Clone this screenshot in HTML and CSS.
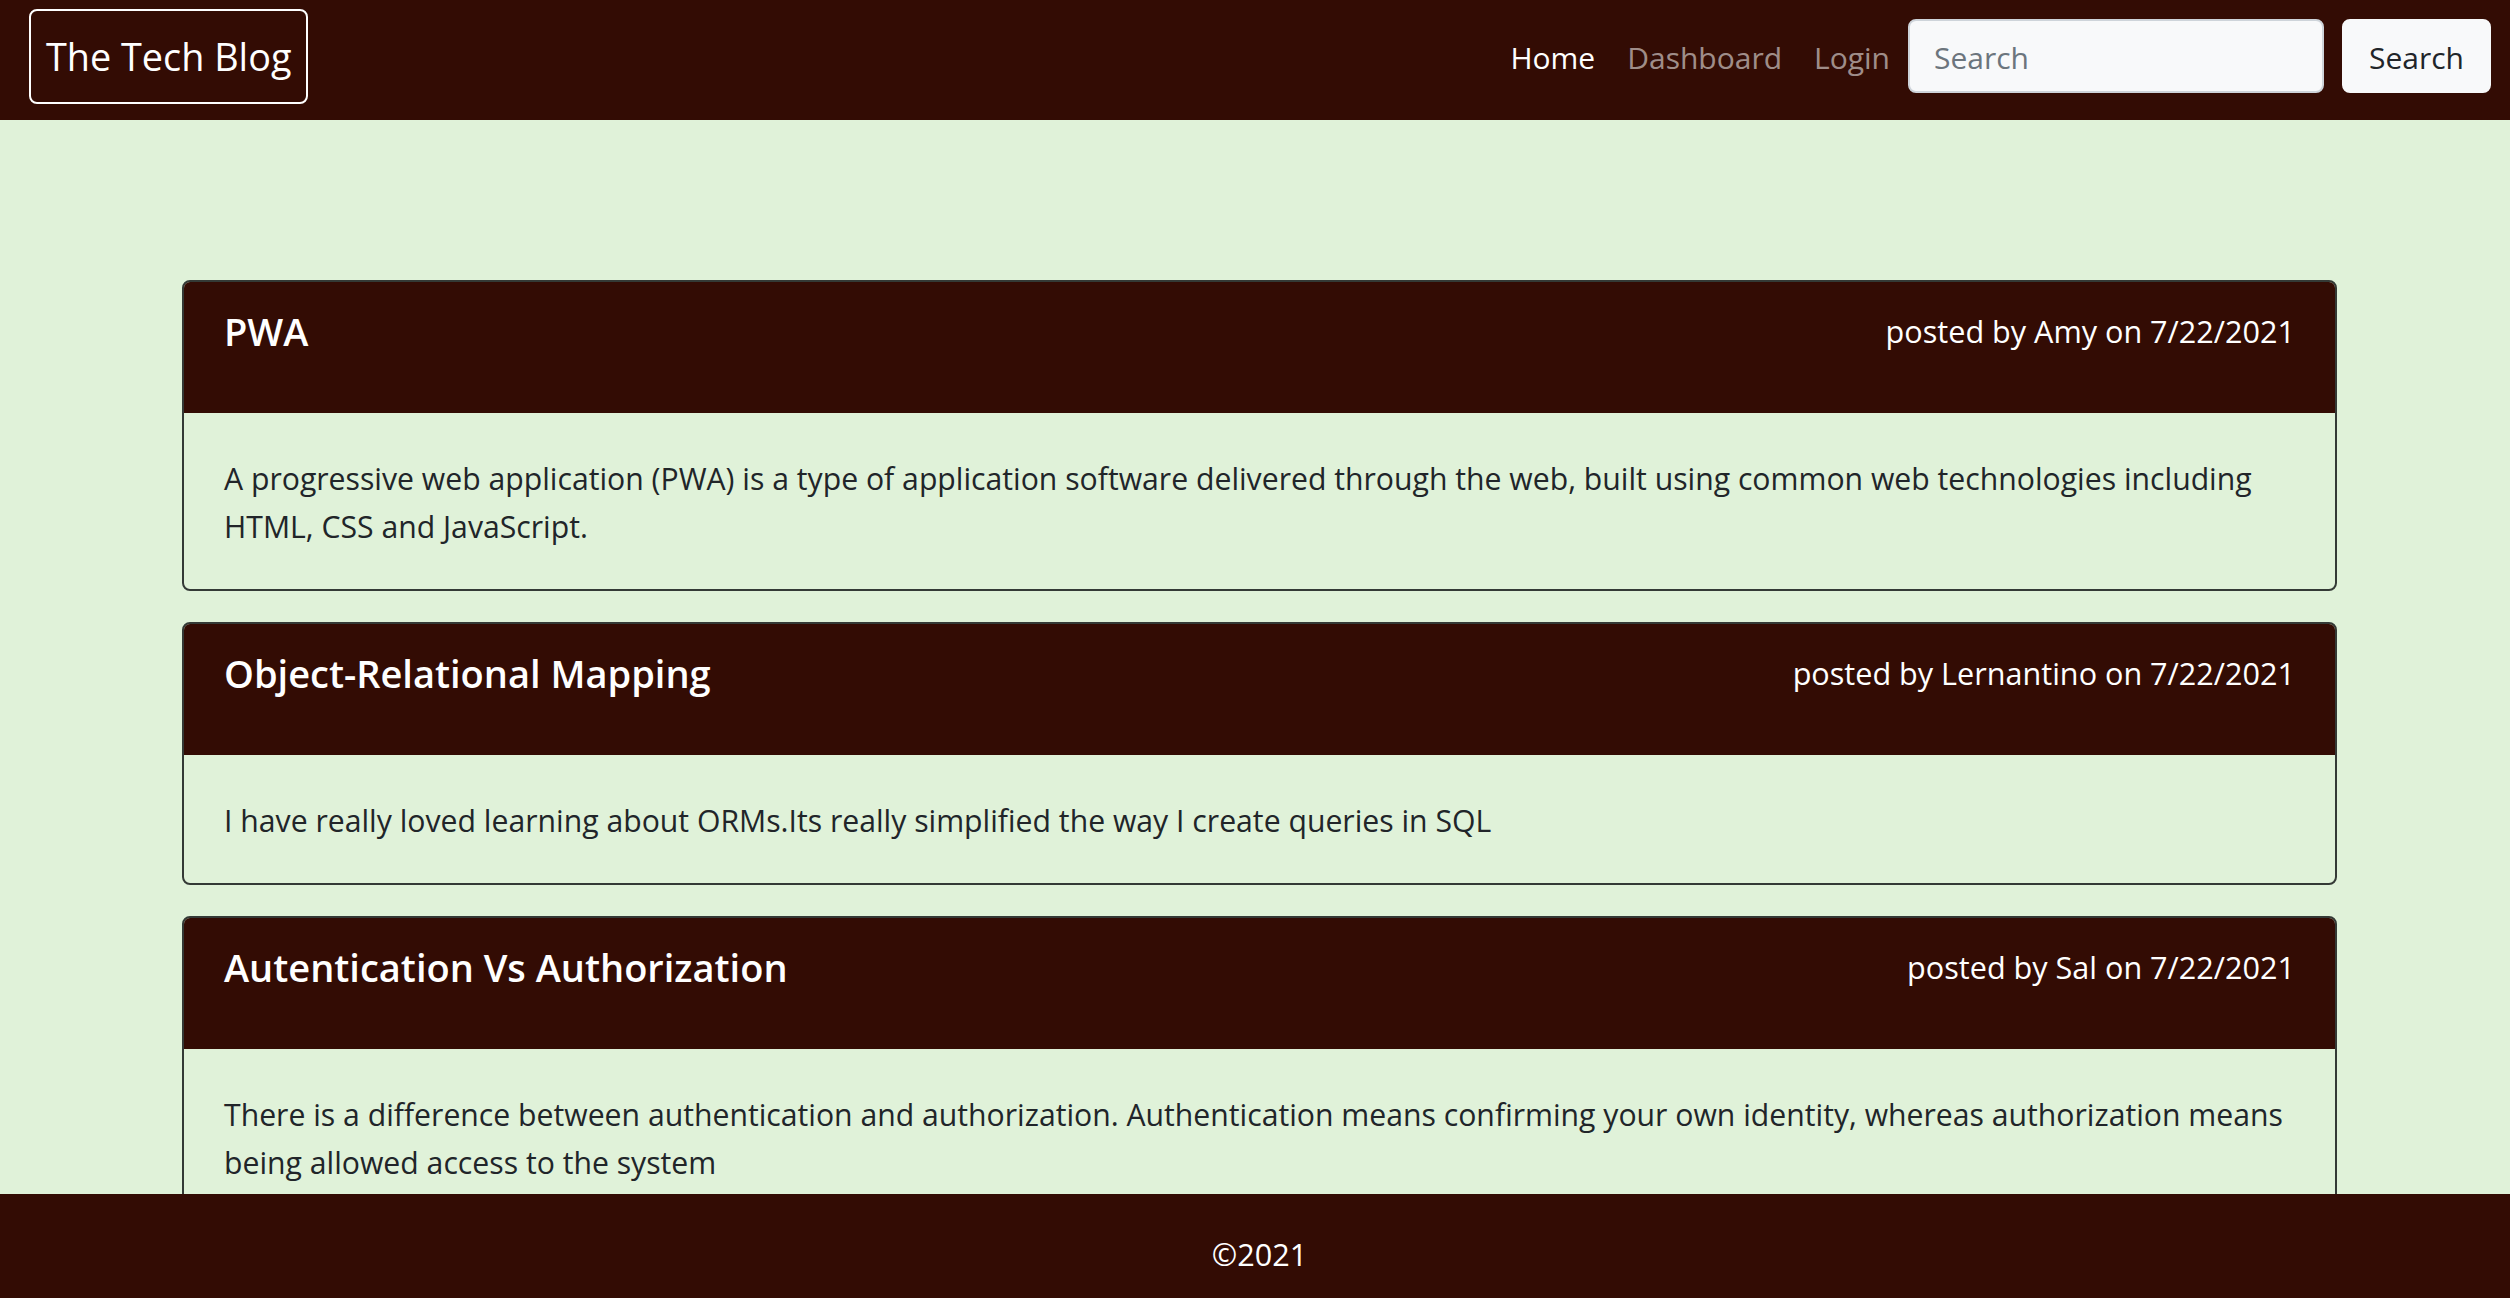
FILE: index.html
```html
<!DOCTYPE html>
<html lang="en">
<head>
<meta charset="utf-8">
<title>The Tech Blog</title>
<link rel="stylesheet" href="styles.css">
</head>
<body>
<nav class="navbar">
  <a class="brand" href="#">The Tech Blog</a>
  <div class="nav-right">
    <ul class="nav-links">
      <li><a class="nav-link active" href="#">Home</a></li>
      <li><a class="nav-link" href="#">Dashboard</a></li>
      <li><a class="nav-link" href="#">Login</a></li>
    </ul>
    <form class="search">
      <input class="search-input" type="search" placeholder="Search">
      <button class="search-btn" type="button">Search</button>
    </form>
  </div>
</nav>

<main class="posts">
  <article class="card">
    <header class="card-header">
      <h2 class="card-title">PWA</h2>
      <p class="card-meta">posted by Amy on 7/22/2021</p>
    </header>
    <div class="card-body">
      <p>A progressive web application (PWA) is a type of application software delivered through the web, built using common web technologies including HTML, CSS and JavaScript.</p>
    </div>
  </article>
  <article class="card">
    <header class="card-header">
      <h2 class="card-title">Object-Relational Mapping</h2>
      <p class="card-meta">posted by Lernantino on 7/22/2021</p>
    </header>
    <div class="card-body">
      <p>I have really loved learning about ORMs.Its really simplified the way I create queries in SQL</p>
    </div>
  </article>
  <article class="card">
    <header class="card-header">
      <h2 class="card-title">Autentication Vs Authorization</h2>
      <p class="card-meta">posted by Sal on 7/22/2021</p>
    </header>
    <div class="card-body">
      <p>There is a difference between authentication and authorization. Authentication means confirming your own identity, whereas authorization means being allowed access to the system</p>
    </div>
  </article>
</main>

<footer class="footer">©2021</footer>
</body>
</html>
```
FILE: styles.css
```css
* { box-sizing: border-box; }

html, body {
  margin: 0;
  padding: 0;
}

body {
  background: #e0f2d9;
  font-family: "Open Sans", "Noto Sans", "Liberation Sans", sans-serif;
  font-size: 30.2px;
  line-height: 48px;
  color: #212529;
}

/* ---------- navbar ---------- */
.navbar {
  display: flex;
  justify-content: space-between;
  align-items: center;
  height: 120px;
  padding: 0 19px 8px 29px;
  background: #330c04;
}

.brand {
  display: block;
  padding: 16px 15px 15px;
  border: 2px solid #ffffff;
  border-radius: 8px;
  color: #ffffff;
  font-size: 37.8px;
  line-height: 60px;
  text-decoration: none;
}

.nav-right {
  display: flex;
  align-items: center;
}

.nav-links {
  display: flex;
  list-style: none;
  margin: 0;
  padding: 0;
}

.nav-link {
  display: block;
  padding: 4px 16px 0;
  color: rgba(255, 255, 255, 0.55);
  text-decoration: none;
  font-size: 30px;
  line-height: 48px;
}

.nav-link.active {
  color: #ffffff;
}

.search {
  display: flex;
  align-items: center;
  margin: 0 0 0 2px;
}

.search-input {
  width: 416px;
  height: 74px;
  padding: 3px 24px 0;
  border: 2px solid #ced4da;
  border-radius: 8px;
  background: #f8f9fa;
  font-family: inherit;
  font-size: 30px;
  color: #212529;
  outline: none;
}

.search-input::placeholder {
  color: #6c757d;
}

.search-btn {
  height: 74px;
  margin-left: 18px;
  padding: 3px 25px 0;
  border: 2px solid #f8f9fa;
  border-radius: 8px;
  background: #f8f9fa;
  font-family: inherit;
  font-size: 30px;
  color: #212529;
}

/* ---------- posts ---------- */
.posts {
  padding: 160px 173px 140px 182px;
}

.card {
  margin-bottom: 31px;
  border: 2px solid #343a36;
  border-radius: 8px;
  overflow: hidden;
}

.card-header {
  display: flex;
  justify-content: space-between;
  align-items: flex-start;
  padding: 25px 40px 26px;
  background: #330c04;
  color: #ffffff;
}

.card-title {
  margin: 0;
  font-size: 38px;
  font-weight: 600;
  line-height: 48px;
}

.card-meta {
  margin: 0 0 32px;
  font-size: 30.6px;
  line-height: 48px;
}

.card-body {
  padding: 42px 40px 38px;
}

.card-body p {
  margin: 0;
}

/* ---------- footer ---------- */
.footer {
  position: fixed;
  left: 0;
  right: 0;
  bottom: 0;
  height: 104px;
  padding: 36px 0 0 9px;
  background: #330c04;
  color: #ffffff;
  text-align: center;
  font-size: 30.6px;
  line-height: 48px;
}
```
